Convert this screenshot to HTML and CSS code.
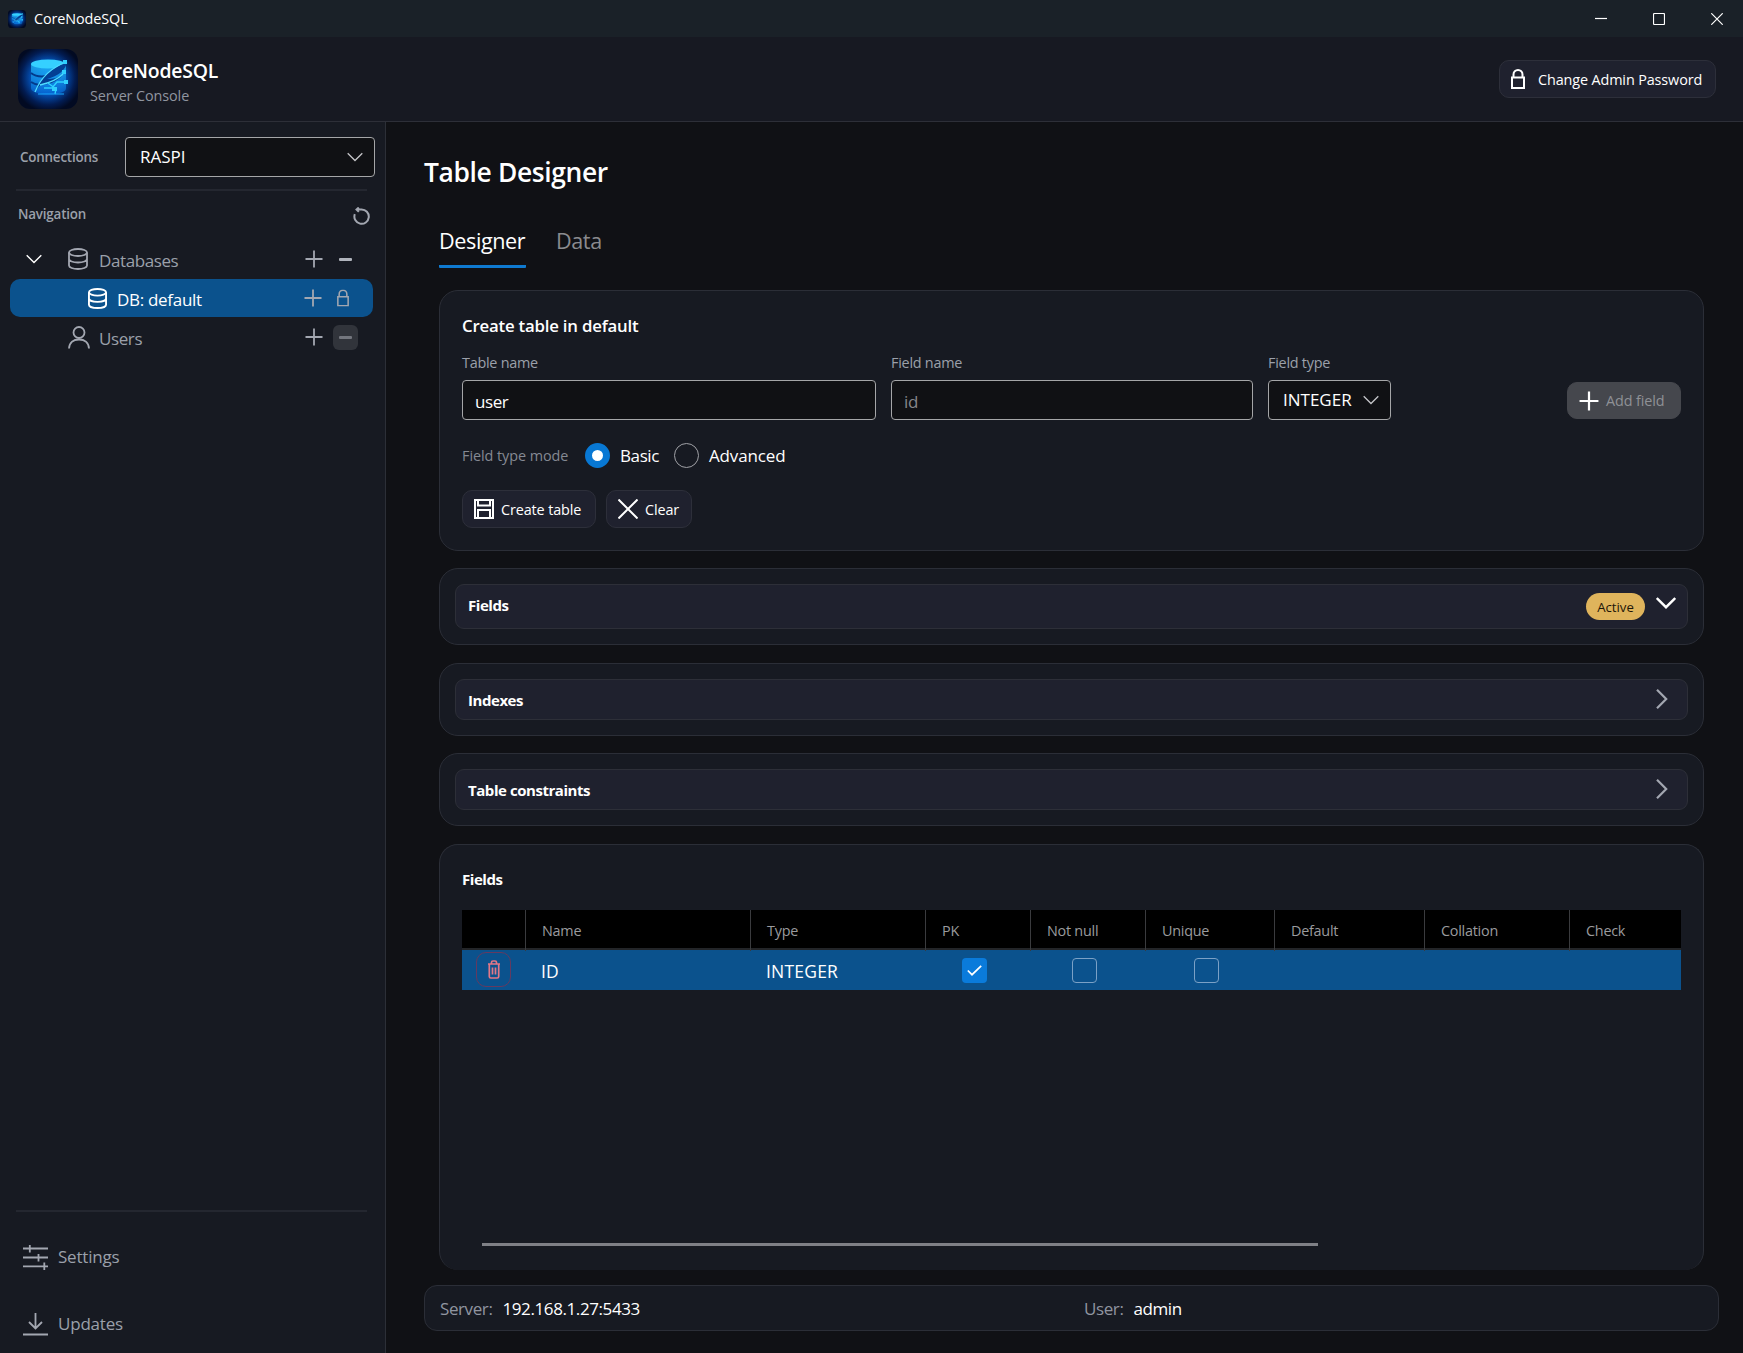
FILE: index.html
```html
<!DOCTYPE html>
<html lang="en">
  <head>
    <meta charset="UTF-8" />
    <meta name="viewport" content="width=device-width, initial-scale=1.0" />
    <title>CoreNodeSQL</title>
    <link rel="stylesheet" href="styles.css">
  </head>
  <body>
    <svg class="defs" width="0" height="0">
      <defs>
        <radialGradient id="glow" cx="50%" cy="48%" r="56%">
          <stop offset="0" stop-color="#0a8cf5" />
          <stop offset="0.5" stop-color="#0450b4" />
          <stop offset="0.8" stop-color="#021c52" />
          <stop offset="1" stop-color="#020a22" />
        </radialGradient>
        <linearGradient id="drum" x1="0" y1="0" x2="0" y2="1">
          <stop offset="0" stop-color="#25c4ff" />
          <stop offset="1" stop-color="#0668d8" />
        </linearGradient>
        <symbol id="logo" viewBox="0 0 60 60">
          <rect width="60" height="60" rx="12" fill="url(#glow)" />
          <path d="M13 15v24c0 4 8 6 18 6s17-2 17-6V15z" fill="url(#drum)" opacity="0.7" />
          <ellipse cx="30" cy="15" rx="17" ry="4.5" fill="#35d0ff" />
          <path d="M13 24c5 4 10 4 16 3M13 33c3 2 6 3 9 3" fill="none" stroke="#033a8a" stroke-width="2" />
          <path d="M18 41c6-14 16-22 31-28-1 8-9 14-20 17 6 0 10-1 15-3-7 7-15 9-22 9z" fill="#033f94" />
          <path d="M17 43c6-15 17-25 32-30M22 36c9-2 17-5 23-11" fill="none" stroke="#4fdcff" stroke-width="1.3" />
          <path d="M26 39h8l5-6h8M30 34l8 6-1 5" fill="none" stroke="#2dd2ff" stroke-width="1.4" />
          <path d="M45 11h4v4h-4zM44 21h4v4h-4zM46 31h4v4h-4zM34 38h5v4h-5z" fill="#30cfff" />
          <path d="M20 45h26" stroke="#18a8ff" stroke-width="1" />
        </symbol>
        <symbol id="database" viewBox="0 0 20 22">
          <ellipse cx="10" cy="4.5" rx="9" ry="3.5" />
          <path d="M1 4.500v13c0 2 4 3.500 9 3.500s9-1.500 9-3.500v-13M1 11c0 2 4 3.500 9 3.500s9-1.500 9-3.500" />
        </symbol>
        <symbol id="plus" viewBox="0 0 18 18">
          <path d="M9 .5v17M.5 9h17" />
        </symbol>
        <symbol id="lock" viewBox="0 0 14 20">
          <path d="M1 8.500h12V19H1zM2.500 8.500V5.500a4.500 4.500 0 0 1 9 0v3" />
        </symbol>
        <symbol id="chevron" viewBox="0 0 16 10">
          <path d="M.7 1.200L8 8.500l7.300-7.300" />
        </symbol>
      </defs>
    </svg>

    <div class="titlebar">
      <svg class="app-icon"><use href="#logo" /></svg>
      <span>CoreNodeSQL</span>
      <div class="window-buttons">
        <svg width="12" height="12" viewBox="0 0 12 12"><path d="M0 5.500h12" /></svg>
        <svg width="12" height="12" viewBox="0 0 12 12"><rect x=".5" y=".5" width="11" height="11" rx="1" /></svg>
        <svg width="12" height="12" viewBox="0 0 12 12"><path d="M.3.3l11.400 11.400M11.700.3L.3 11.700" /></svg>
      </div>
    </div>

    <header class="header">
      <svg class="logo"><use href="#logo" /></svg>
      <div class="brand">
        <div class="brand-name">CoreNodeSQL</div>
        <div class="brand-sub">Server Console</div>
      </div>
      <button class="btn btn-password">
        <svg class="icon" width="14" height="20"><use href="#lock" /></svg>
        <span>Change Admin Password</span>
      </button>
    </header>

    <div class="layout">
      <aside class="sidebar">
        <div class="connections">
          <span class="side-label">Connections</span>
          <div class="combo">
            <span>RASPI</span>
            <svg class="icon thin" width="16" height="10"><use href="#chevron" /></svg>
          </div>
        </div>
        <div class="divider"></div>
        <div class="nav-head">
          <span class="side-label">Navigation</span>
          <svg class="icon refresh" width="17" height="18" viewBox="0 0 17 18">
            <path d="M1.800 7.200A7.200 7.200 0 1 0 8.500 2.400H3.500M5.800.5L3.500 2.600l2.300 2.300" />
          </svg>
        </div>
        <div class="tree">
          <div class="tree-row">
            <svg class="icon white arrow" width="16" height="10"><use href="#chevron" /></svg>
            <svg class="icon" width="20" height="22"><use href="#database" /></svg>
            <span class="tree-text">Databases</span>
            <svg class="icon" width="18" height="18"><use href="#plus" /></svg>
            <span class="mini"><i></i></span>
          </div>
          <div class="tree-row selected">
            <svg class="icon white child" width="19" height="21"><use href="#database" /></svg>
            <span class="tree-text">DB: default</span>
            <svg class="icon" width="18" height="18"><use href="#plus" /></svg>
            <svg class="icon small-lock" width="12" height="18" viewBox="0 0 14 20"><use href="#lock" /></svg>
          </div>
          <div class="tree-row">
            <svg class="icon user" width="22" height="23" viewBox="0 0 22 23">
              <circle cx="11" cy="6.500" r="5.500" />
              <path d="M1 22.500c.3-6 4.500-9 10-9s9.700 3 10 9" />
            </svg>
            <span class="tree-text">Users</span>
            <svg class="icon" width="18" height="18"><use href="#plus" /></svg>
            <span class="mini disabled"><i></i></span>
          </div>
        </div>
        <div class="side-bottom">
          <div class="divider"></div>
          <div class="side-link">
            <svg class="icon" width="25" height="25" viewBox="0 0 25 25">
              <path d="M0 3.500h25M0 12.500h25M0 21.300h25M6.800 0v7.500M15.500 9v7.500M21.300 17.500V25" />
            </svg>
            <span>Settings</span>
          </div>
          <div class="side-link">
            <svg class="icon" width="25" height="23" viewBox="0 0 25 23">
              <path d="M12.500 0v15M6 9l6.500 6.500L19 9M0 21.500h25" />
            </svg>
            <span>Updates</span>
          </div>
        </div>
      </aside>

      <main class="main">
        <h1>Table Designer</h1>
        <div class="tabs">
          <div class="tab active">Designer</div>
          <div class="tab">Data</div>
        </div>

        <section class="card create">
          <h2>Create table in default</h2>
          <div class="form-row">
            <div class="field table-name">
              <label>Table name</label>
              <div class="input">user</div>
            </div>
            <div class="field field-name">
              <label>Field name</label>
              <div class="input placeholder">id</div>
            </div>
            <div class="field field-type">
              <label>Field type</label>
              <div class="combo">
                <span>INTEGER</span>
                <svg class="icon thin" width="16" height="10"><use href="#chevron" /></svg>
              </div>
            </div>
            <button class="btn btn-add">
              <svg class="icon" width="20" height="20"><use href="#plus" /></svg>
              <span>Add field</span>
            </button>
          </div>
          <div class="mode-row">
            <span class="mode-label">Field type mode</span>
            <span class="radio checked"></span>
            <span class="mode-basic">Basic</span>
            <span class="radio"></span>
            <span class="mode-advanced">Advanced</span>
          </div>
          <div class="actions">
            <button class="btn btn-create">
              <svg class="icon" width="20" height="20" viewBox="0 0 20 20">
                <path d="M1 1h18v18H1zM4 1v5.500h12V1M4 19v-8h12v8" />
              </svg>
              <span>Create table</span>
            </button>
            <button class="btn btn-clear">
              <svg class="icon" width="20" height="20" viewBox="0 0 20 20">
                <path d="M.5.5l19 19M19.500.5l-19 19" />
              </svg>
              <span>Clear</span>
            </button>
          </div>
        </section>

        <section class="card panel">
          <div class="expander open">
            <span>Fields</span>
            <span class="badge">Active</span>
            <svg class="icon down" width="20" height="12" viewBox="0 0 20 12"><path d="M.8 1l9.200 9.200L19.200 1" /></svg>
          </div>
        </section>
        <section class="card panel">
          <div class="expander">
            <span>Indexes</span>
            <svg class="icon right" width="12" height="20" viewBox="0 0 12 20"><path d="M1 .8l9.200 9.200L1 19.200" /></svg>
          </div>
        </section>
        <section class="card panel">
          <div class="expander">
            <span>Table constraints</span>
            <svg class="icon right" width="12" height="20" viewBox="0 0 12 20"><path d="M1 .8l9.200 9.200L1 19.200" /></svg>
          </div>
        </section>

        <section class="card fields">
          <h3>Fields</h3>
          <div class="grid grid-head">
            <div></div>
            <div>Name</div>
            <div>Type</div>
            <div>PK</div>
            <div>Not null</div>
            <div>Unique</div>
            <div>Default</div>
            <div>Collation</div>
            <div>Check</div>
          </div>
          <div class="grid grid-row">
            <div class="cell-delete">
              <span class="delete">
                <svg width="12" height="19" viewBox="0 0 12 19">
                  <path d="M0 4h12M1.300 4v12.500c0 1 .5 1.500 1.500 1.500h6.400c1 0 1.500-.5 1.500-1.500V4M3.500 4V2.500C3.500 1.500 4 1 5 1h2c1 0 1.500.5 1.500 1.500V4M4.500 7.500v7M7.500 7.500v7" />
                </svg>
              </span>
            </div>
            <div>ID</div>
            <div>INTEGER</div>
            <div class="cell-check">
              <span class="check on">
                <svg width="15" height="11" viewBox="0 0 15 11"><path d="M.8 5.500l4.200 4.200L14.200.8" /></svg>
              </span>
            </div>
            <div class="cell-check"><span class="check"></span></div>
            <div class="cell-check"><span class="check"></span></div>
            <div></div>
            <div></div>
            <div></div>
          </div>
          <div class="scrollbar"></div>
        </section>

        <footer class="status">
          <div><span class="muted">Server:</span> <span>192.168.1.27:5433</span></div>
          <div><span class="muted">User:</span> <span>admin</span></div>
        </footer>
      </main>
    </div>
  </body>
</html>
```
FILE: styles.css
```css
* {
  box-sizing: border-box;
}
body {
  margin: 0;
  height: 1353px;
  display: flex;
  flex-direction: column;
  overflow: hidden;
  background: #101115;
  color: #fff;
  font-family: "Open Sans", "Noto Sans", sans-serif;
  font-size: 17px;
  line-height: 24px;
  letter-spacing: -0.4px;
  white-space: nowrap;
}
h1,
h2,
h3 {
  margin: 0;
  font-weight: 600;
}
svg {
  display: block;
  flex: none;
}
.defs {
  position: absolute;
}
.icon {
  fill: none;
  stroke: #a3a7b1;
  stroke-width: 1.8;
}
.icon.white {
  stroke: #fff;
}
.icon.thin {
  stroke: #c4c5c8;
  stroke-width: 1.3;
}

/* title bar */
.titlebar {
  height: 37px;
  flex: none;
  display: flex;
  align-items: center;
  padding: 0 20px 0 8px;
  background: #1a2128;
  font-size: 14.4px;
  letter-spacing: -0.1px;
}
.app-icon {
  width: 18px;
  height: 18px;
  margin-right: 8px;
}
.window-buttons {
  margin-left: auto;
  display: flex;
  gap: 46px;
}
.window-buttons svg {
  fill: none;
  stroke: #fff;
  stroke-width: 1.2;
}

/* header */
.header {
  height: 85px;
  flex: none;
  display: flex;
  align-items: center;
  padding: 0 27px 0 18px;
  background: #171922;
  border-bottom: 1px solid #2d2f38;
}
.logo {
  width: 60px;
  height: 60px;
  margin-right: 12px;
}
.brand {
  padding-top: 7px;
}
.brand-name {
  font-size: 19.4px;
  font-weight: 600;
  line-height: 26px;
  letter-spacing: -0.2px;
}
.brand-sub {
  color: #9095a0;
  font-size: 14.4px;
  letter-spacing: -0.1px;
}
.btn {
  height: 38px;
  display: flex;
  align-items: center;
  padding: 0;
  background: #1f212e;
  border: 1px solid #2d2f3a;
  border-radius: 10px;
  color: #fff;
  font: inherit;
  font-size: 14.4px;
  letter-spacing: -0.12px;
}
.btn span {
  padding-top: 1px;
}
.btn .icon {
  stroke: #fff;
  stroke-width: 2;
}
.btn-password {
  width: 217px;
  margin-left: auto;
  padding-left: 11px;
  gap: 13px;
}

.layout {
  flex: 1;
  display: flex;
  min-height: 0;
}

/* sidebar */
.sidebar {
  width: 386px;
  flex: none;
  display: flex;
  flex-direction: column;
  background: #171a22;
  border-right: 1px solid #2c2f37;
}
.side-label {
  color: #9ba0aa;
  font-size: 13.4px;
  font-weight: 600;
  letter-spacing: -0.2px;
}
.connections {
  display: flex;
  align-items: center;
  justify-content: space-between;
  height: 67px;
  padding: 3px 10px 0 20px;
}
.combo {
  height: 40px;
  display: flex;
  align-items: center;
  justify-content: space-between;
  padding: 0 11px 1px 14px;
  background: #101114;
  border: 1px solid #a5a6a8;
  border-radius: 4px;
  letter-spacing: 0;
}
.connections .combo {
  width: 250px;
}
.divider {
  height: 2px;
  margin: 0 18px 0 16px;
  background: #242730;
}
.nav-head {
  height: 49px;
  display: flex;
  align-items: flex-start;
  justify-content: space-between;
  padding: 11px 15px 0 18px;
}
.refresh {
  margin-top: 5px;
  stroke-width: 2;
}
.tree {
  padding: 0 12px 0 10px;
}
.tree-row {
  height: 38px;
  display: flex;
  align-items: center;
  margin-bottom: 1px;
  padding: 0 15px 0 58px;
  border-radius: 10px;
  color: #9ba0aa;
}
.tree-row .arrow {
  margin: 0 26px 0 -42px;
  stroke-width: 1.4;
}
.tree-row .child {
  margin-left: 20px;
  stroke-width: 2;
}
.tree-text {
  flex: 1;
  padding-top: 3px;
  margin-left: 11px;
}
.tree-row .user {
  margin-right: -2px;
}
.selected {
  background: #0b528d;
  color: #fff;
}
.selected .tree-text {
  margin-left: 10px;
  letter-spacing: -0.3px;
}
.small-lock {
  margin: 0 9px 0 15px;
}
.mini {
  width: 25px;
  height: 25px;
  margin-left: 10px;
  display: flex;
  align-items: center;
  justify-content: center;
  border-radius: 6px;
}
.mini i {
  width: 13px;
  height: 3px;
  border-radius: 1px;
  background: #b0b4bc;
}
.mini.disabled {
  background: #31343b;
}
.mini.disabled i {
  background: #73767e;
}
.side-bottom {
  margin-top: auto;
  padding-bottom: 7px;
}
.side-bottom .divider {
  margin-bottom: 23px;
}
.side-link {
  height: 44px;
  display: flex;
  align-items: center;
  gap: 10px;
  padding-left: 23px;
  color: #9ba0aa;
  letter-spacing: -0.2px;
}
.side-link + .side-link {
  margin-top: 23px;
}

/* main */
.main {
  flex: 1;
  min-width: 0;
  display: flex;
  flex-direction: column;
  padding: 32px 24px 22px 38px;
}
h1 {
  font-size: 26.4px;
  line-height: 36px;
  letter-spacing: -0.35px;
}
.tabs {
  display: flex;
  gap: 30px;
  margin: 31px 0 22px 15px;
  font-size: 21.6px;
}
.tab {
  height: 47px;
  line-height: 40px;
  color: #8a8b8e;
}
.tab.active {
  width: 87px;
  color: #fff;
  border-bottom: 3px solid #0f7ad0;
  border-radius: 1px;
}
.card {
  flex: none;
  margin: 0 15px 18px 15px;
  background: #171a22;
  border: 1px solid #2b2e37;
  border-radius: 19px;
}
.create {
  height: 261px;
  margin-bottom: 17px;
  padding: 23px 22px;
}
h2 {
  font-size: 16.800px;
  letter-spacing: -0.2px;
}
.form-row {
  display: flex;
  align-items: flex-end;
  gap: 15px;
  margin-top: 12px;
}
label {
  display: block;
  height: 30px;
  padding-top: 1px;
  color: #9ba0aa;
  font-size: 14.4px;
  letter-spacing: -0.25px;
}
.input {
  height: 40px;
  padding: 9px 12px 0;
  background: #101114;
  border: 1px solid #a5a6a8;
  border-radius: 4px;
}
.placeholder {
  color: #85868a;
}
.table-name {
  width: 414px;
}
.field-name {
  width: 362px;
}
.field-type {
  width: 123px;
}
.btn-add {
  width: 114px;
  height: 37px;
  margin-left: auto;
  margin-bottom: 1px;
  padding-left: 11px;
  gap: 7px;
  background: #45474d;
  border-color: #45474d;
  color: #8f9196;
}
.mode-row {
  display: flex;
  align-items: center;
  margin-top: 22px;
}
.mode-label {
  width: 123px;
  padding-top: 1px;
  color: #858993;
  font-size: 14.4px;
  letter-spacing: -0.05px;
}
.radio {
  width: 25px;
  height: 25px;
  margin-right: 10px;
  border: 1.500px solid #a0a1a6;
  border-radius: 50%;
}
.radio.checked {
  border: 7px solid #0878d4;
  background: #fff;
}
.mode-basic,
.mode-advanced {
  padding-top: 2px;
}
.mode-basic {
  width: 54px;
}
.mode-advanced {
  letter-spacing: -0.15px;
}
.actions {
  display: flex;
  gap: 10px;
  margin-top: 22px;
}
.btn-create,
.btn-clear {
  padding-left: 11px;
  gap: 7px;
}
.btn-create {
  width: 134px;
}
.btn-clear {
  width: 86px;
}
.panel {
  padding: 15px;
  margin-bottom: 17px;
}
.panel:nth-of-type(2) {
  margin-bottom: 18px;
}
.panel:nth-of-type(4) {
  margin-bottom: 18px;
}
.expander {
  height: 41px;
  display: flex;
  align-items: center;
  padding: 0 19px 0 12px;
  background: #1f212e;
  border: 1px solid #2d2f38;
  border-radius: 9px;
  font-size: 15px;
  font-weight: 700;
  letter-spacing: -0.45px;
}
.expander.open {
  height: 45px;
  padding-right: 11px;
}
.expander > span:first-child {
  flex: 1;
}
.expander.open > span:first-child {
  padding-bottom: 4px;
}
.badge {
  width: 59px;
  height: 27px;
  margin: 0 11px 0 0;
  border-radius: 14px;
  background: #dfb45c;
  color: #1d1608;
  font-size: 13.200px;
  font-weight: 400;
  line-height: 28px;
  letter-spacing: 0;
  text-align: center;
}
.down {
  margin-bottom: 8px;
  stroke: #fff;
  stroke-width: 2.400;
}
.right {
  margin-bottom: 1px;
  stroke-width: 2.200;
}

/* fields table */
.fields {
  height: 426px;
  margin-bottom: 15px;
  padding: 22px 22px 0;
  border-bottom: none;
}
h3 {
  font-size: 15px;
  font-weight: 700;
  letter-spacing: -0.45px;
}
.grid {
  display: grid;
  grid-template-columns: 64px 225px 175px 105px 115px 129px 150px 145px 111px;
}
.grid-head {
  height: 40px;
  margin-top: 19px;
  background: #000;
  border-bottom: 2px solid #232528;
  color: #9a9b9e;
  font-size: 14.400px;
  line-height: 41px;
  letter-spacing: -0.25px;
}
.grid-head div {
  padding-left: 16px;
  border-right: 1px solid #3a3b3e;
}
.grid-head div:last-child {
  border-right: none;
}
.grid-row {
  height: 40px;
  background: #0b528d;
  font-size: 17.500px;
  line-height: 42px;
  letter-spacing: 0.2px;
}
.grid-row div {
  padding-left: 15px;
}
.grid-row .cell-delete {
  padding: 2px 0 0 14px;
}
.delete {
  width: 35px;
  height: 35px;
  display: flex;
  align-items: center;
  justify-content: center;
  border: 1px solid #643a60;
  border-radius: 10px;
}
.delete svg {
  fill: none;
  stroke: #e27787;
  stroke-width: 1.700;
}
.grid-row .cell-check {
  display: flex;
  align-items: center;
  justify-content: center;
  height: 40px;
  padding: 0 8px 0 0;
}
.check {
  width: 25px;
  height: 25px;
  border: 1px solid #7ba1c6;
  border-radius: 4px;
}
.check.on {
  display: flex;
  align-items: center;
  justify-content: center;
  border: none;
  background: #0a7bdb;
}
.check svg {
  fill: none;
  stroke: #fff;
  stroke-width: 1.700;
}
.scrollbar {
  width: 836px;
  height: 3px;
  margin: 253px 0 0 20px;
  background: #7f8086;
}

/* status bar */
.status {
  height: 46px;
  flex: none;
  display: grid;
  grid-template-columns: 644px 1fr;
  align-items: center;
  padding: 1px 15px 0;
  background: #171a22;
  border: 1px solid #2b2e37;
  border-radius: 13px;
}
.status div {
  display: flex;
  gap: 10px;
}
.muted {
  color: #9095a0;
}
```
